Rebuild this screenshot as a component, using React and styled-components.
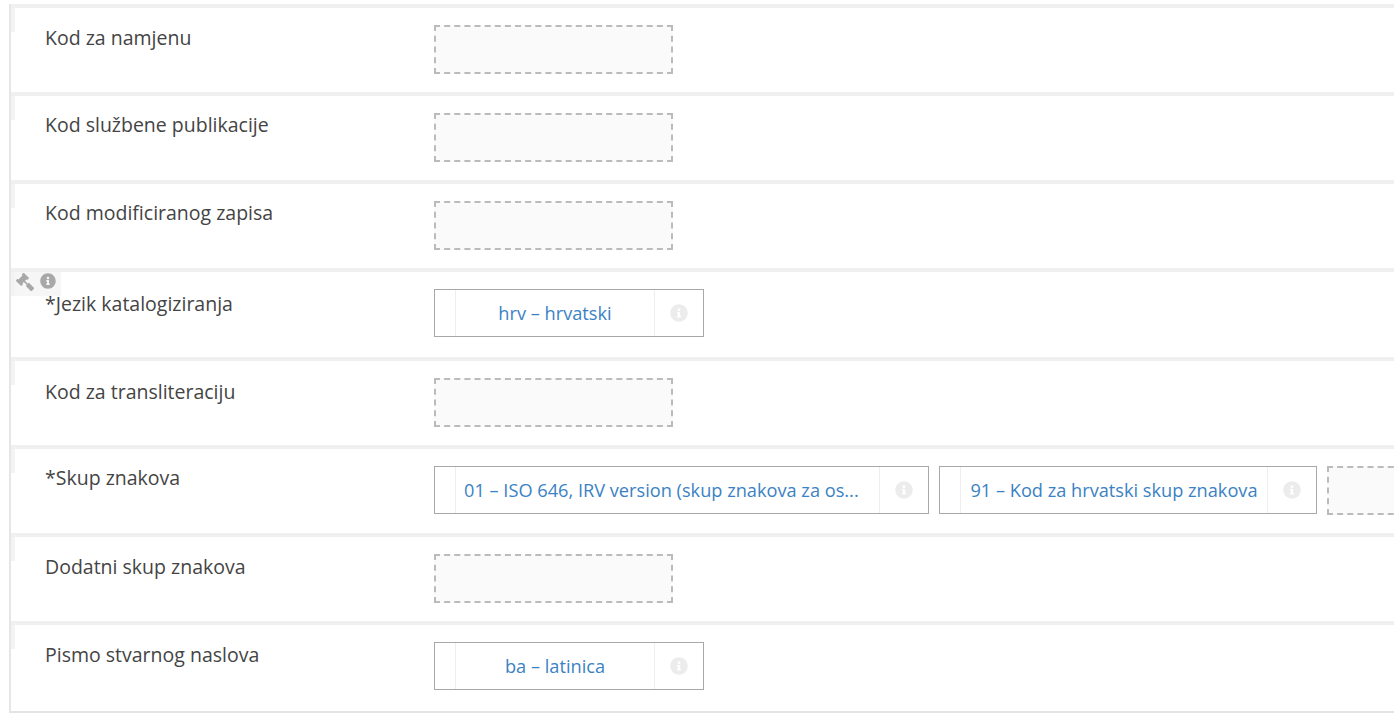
import styled, { createGlobalStyle } from 'styled-components';
import { FaGavel, FaInfoCircle } from 'react-icons/fa';

const GlobalStyle = createGlobalStyle`
  html, body {
    margin: 0;
    background: #fff;
    overflow: hidden;
  }
  body {
    font-family: "Open Sans", "Liberation Sans", sans-serif;
  }
`;

const rows = [
  { label: 'Kod za namjenu', height: 85, labelTop: 0 },
  { label: 'Kod službene publikacije', height: 85, labelTop: -1 },
  { label: 'Kod modificiranog zapisa', height: 85, labelTop: -1 },
  {
    label: '*Jezik katalogiziranja',
    height: 86,
    labelTop: 2,
    tools: true,
    values: [{ text: 'hrv – hrvatski', width: 270 }],
  },
  { label: 'Kod za transliteraciju', height: 85, labelTop: 1 },
  {
    label: '*Skup znakova',
    height: 85,
    labelTop: -1,
    values: [
      { text: '01 – ISO 646, IRV version (skup znakova za os...', width: 495, truncated: true },
      { text: '91 – Kod za hrvatski skup znakova', width: 378 },
    ],
    empty: true,
  },
  { label: 'Dodatni skup znakova', height: 85, labelTop: 0 },
  {
    label: 'Pismo stvarnog naslova',
    height: 87,
    labelTop: 0,
    values: [{ text: 'ba – latinica', width: 270 }],
  },
];

function App() {
  return (
    <>
      <GlobalStyle />
      <Form>
        {rows.map((row) => (
          <Row key={row.label} $height={row.height}>
            <Handle />
            {row.tools && (
              <Tools>
                <Gavel />
                <FaInfoCircle size={16} />
              </Tools>
            )}
            <Label $top={row.labelTop}>{row.label}</Label>
            <Values>
              {row.values &&
                row.values.map((value) => (
                  <Value key={value.text} $width={value.width}>
                    <Grip />
                    <ValueText $truncated={value.truncated}>{value.text}</ValueText>
                    <ValueInfo>
                      <FaInfoCircle size={18} />
                    </ValueInfo>
                  </Value>
                ))}
              {(!row.values || row.empty) && <EmptySlot />}
            </Values>
          </Row>
        ))}
      </Form>
    </>
  );
}

const Form = styled.div`
  width: 1600px;
  margin: 4px 0 0 9px;
  border-left: 2px solid #e6e6e6;
  border-bottom: 2px solid #e4e4e4;
`;

const Row = styled.div`
  position: relative;
  display: flex;
  height: ${(p) => p.$height - 17}px;
  padding-top: 17px;
  border-top: 4px solid #f0f0f0;
  margin-bottom: -1px;
`;

const Handle = styled.div`
  position: absolute;
  top: 0;
  left: 0;
  width: 4px;
  height: 24px;
  background: #f3f3f3;
`;

const Tools = styled.div`
  position: absolute;
  top: 0;
  left: 4px;
  width: 46px;
  height: 24px;
  display: flex;
  align-items: flex-start;
  gap: 6px;
  padding: 1px 0 0 1px;
  box-sizing: border-box;
  background: #f6f6f6;
  color: #a8a8a8;
`;

const Gavel = styled(FaGavel).attrs({ size: 18 })`
  transform: scaleX(-1);
`;

const Label = styled.div`
  width: 389px;
  margin-left: 34px;
  margin-top: ${(p) => p.$top}px;
  flex-shrink: 0;
  font-size: 19.5px;
  line-height: 26px;
  color: #444;
`;

const Values = styled.div`
  display: flex;
  gap: 10px;
  align-items: flex-start;
`;

const Value = styled.div`
  display: flex;
  width: ${(p) => p.$width}px;
  height: 48px;
  box-sizing: border-box;
  border: 1px solid #a8a8a8;
  background: #fff;
`;

const Grip = styled.div`
  width: 20px;
  flex-shrink: 0;
  border-right: 1px solid #eee;
`;

const ValueText = styled.div`
  flex: 1;
  display: flex;
  align-items: center;
  justify-content: ${(p) => (p.$truncated ? 'flex-start' : 'center')};
  padding-left: ${(p) => (p.$truncated ? '8px' : '0')};
  white-space: nowrap;
  font-size: 18.2px;
  color: #3b82c4;
`;

const ValueInfo = styled.div`
  width: 48px;
  flex-shrink: 0;
  display: flex;
  align-items: center;
  justify-content: center;
  border-left: 1px solid #eee;
  color: #ececec;
`;

const EmptySlot = styled.div`
  width: 239px;
  height: 49px;
  box-sizing: border-box;
  border: 2px dashed #bbb;
  background: #fafafa;
`;

export default App;
